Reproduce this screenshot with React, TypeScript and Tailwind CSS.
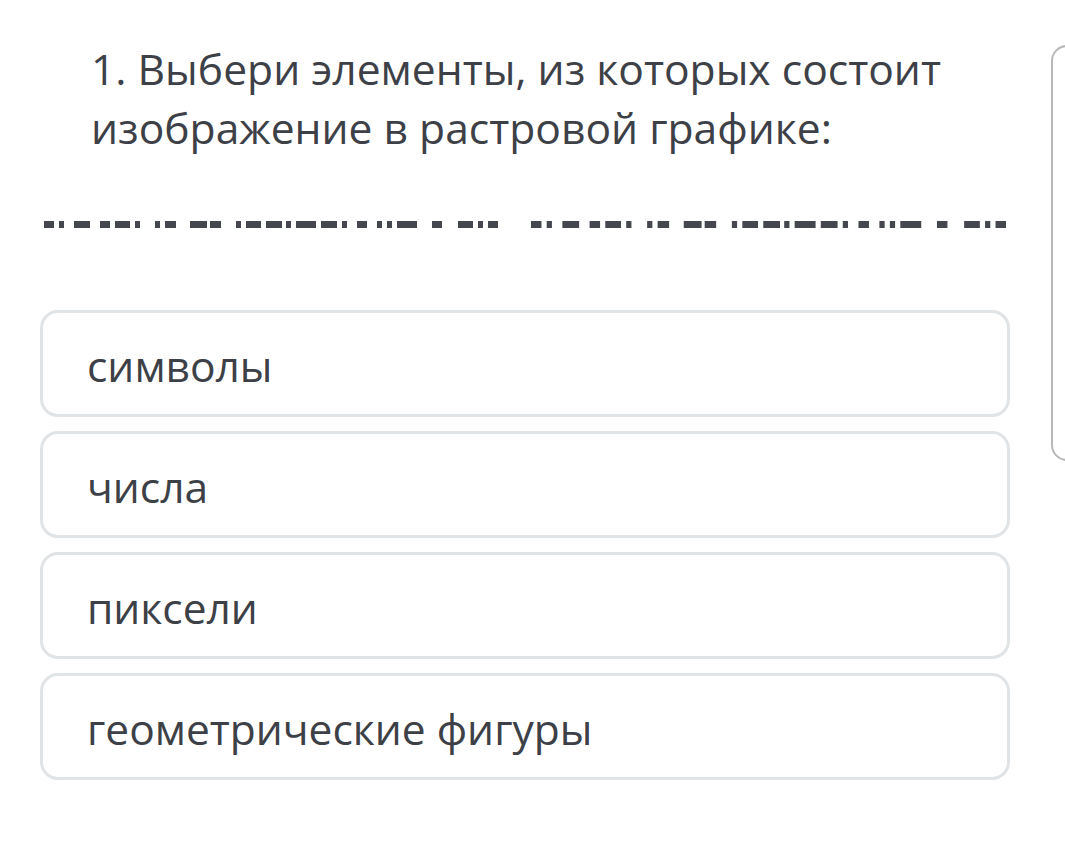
const pattern: [number, number][] = [
  [0, 10], [15, 5], [30, 16], [56, 10], [71, 15], [91, 5], [111, 5], [121, 11],
  [146, 17], [166, 11], [192, 5], [202, 15], [222, 16], [242, 5], [252, 20],
  [277, 16], [298, 5], [313, 10], [333, 5], [343, 5], [353, 20], [388, 10],
  [414, 15], [434, 5], [444, 10],
];

function Blurred({ className }: { className: string }) {
  return (
    <svg className={className} viewBox="0 0 454 7" preserveAspectRatio="none">
      {pattern.map(([x, w], i) => (
        <rect key={i} x={x} y={0} width={w} height={7} fill="#44484e" />
      ))}
    </svg>
  );
}

const options = ["символы", "числа", "пиксели", "геометрические фигуры"];

export default function App() {
  return (
    <div className="flex h-[864px] w-[1065px] overflow-hidden bg-white font-['Open_Sans',sans-serif] text-[#3d4147]">
      <div className="w-[1051px] shrink-0 pl-10 pr-[41px]">
        <h1 className="mt-[39px] pl-[51px] text-[42.6px] leading-[59px] font-normal">
          1. Выбери элементы, из которых состоит изображение в растровой графике:
        </h1>
        <div className="mt-[64px] flex h-[7px] items-center pl-1">
          <Blurred className="h-[7px] w-[454px]" />
          <Blurred className="ml-[33px] h-[7px] w-[475px]" />
        </div>
        <div className="mt-[82px] flex flex-col gap-[14px]">
          {options.map((o) => (
            <div
              key={o}
              className="flex h-[107px] items-center rounded-[18px] border-[3px] border-[#e1e4e6] pl-[44px] pt-[4px] text-[42.5px]"
            >
              {o}
            </div>
          ))}
        </div>
      </div>
      <div className="mt-[45px] h-[416px] w-[60px] shrink-0 rounded-[16px] border-2 border-[#b9b9b9]" />
    </div>
  );
}
